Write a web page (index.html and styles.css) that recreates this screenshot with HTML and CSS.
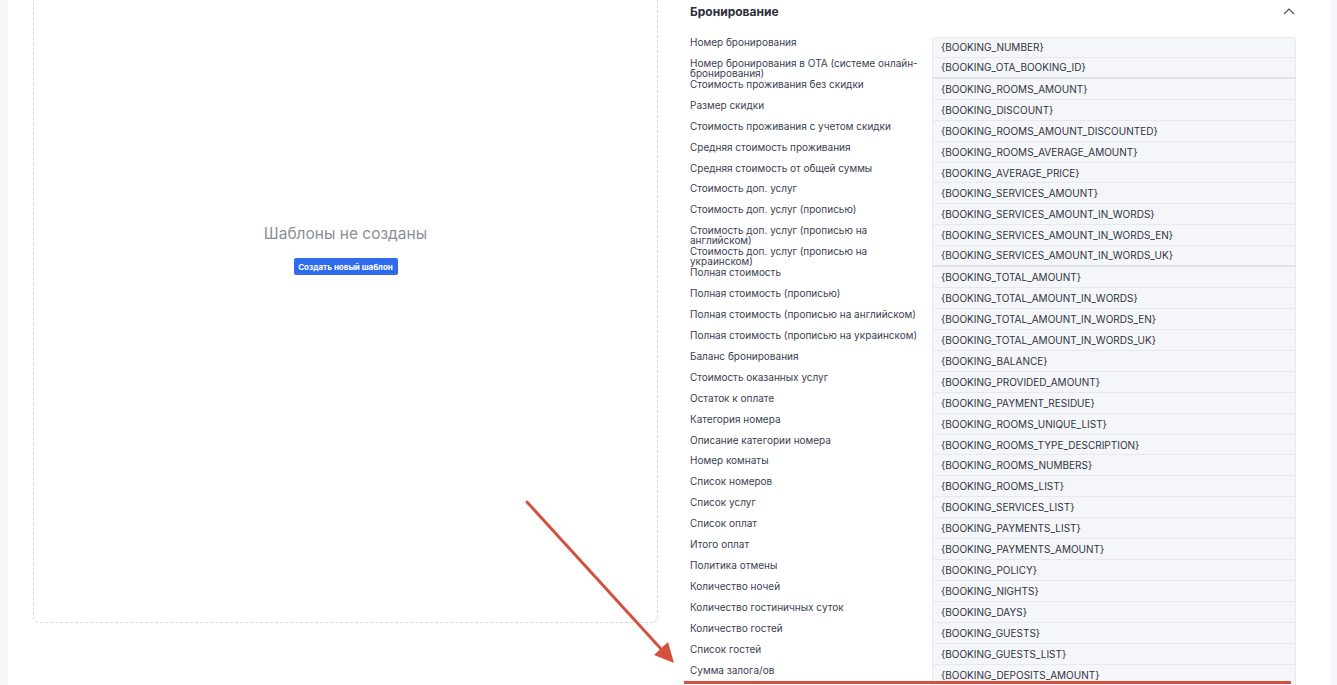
FILE: index.html
```html
<!DOCTYPE html>
<html lang="ru">
<head>
    <meta charset="UTF-8">
    <meta name="viewport" content="width=device-width, initial-scale=1.0">
    <title>Шаблоны</title>
    <link rel="stylesheet" href="styles.css">
</head>
<body>
    <div class="panel">
        <div class="templates">
            <div class="empty-card">
                <div class="empty-title">Шаблоны не созданы</div>
                <button class="btn-create">Создать новый шаблон</button>
            </div>
        </div>

        <div class="vars">
            <div class="vars-head">
                <span class="vars-title">Бронирование</span>
                <svg class="chevron" width="12" height="8" viewBox="0 0 12 8">
                    <path d="M1 7 L6 2 L11 7" fill="none" stroke="#4a5264" stroke-width="1.2"/>
                </svg>
            </div>

            <div class="vars-table">
                <div class="row"><div class="label">Номер бронирования</div><div class="value">{BOOKING_NUMBER}</div></div>
                <div class="row thick"><div class="label">Номер бронирования в ОТА (системе онлайн-бронирования)</div><div class="value">{BOOKING_OTA_BOOKING_ID}</div></div>
                <div class="row"><div class="label">Стоимость проживания без скидки</div><div class="value">{BOOKING_ROOMS_AMOUNT}</div></div>
                <div class="row"><div class="label">Размер скидки</div><div class="value">{BOOKING_DISCOUNT}</div></div>
                <div class="row"><div class="label">Стоимость проживания с учетом скидки</div><div class="value">{BOOKING_ROOMS_AMOUNT_DISCOUNTED}</div></div>
                <div class="row"><div class="label">Средняя стоимость проживания</div><div class="value">{BOOKING_ROOMS_AVERAGE_AMOUNT}</div></div>
                <div class="row"><div class="label">Средняя стоимость от общей суммы</div><div class="value">{BOOKING_AVERAGE_PRICE}</div></div>
                <div class="row"><div class="label">Стоимость доп. услуг</div><div class="value">{BOOKING_SERVICES_AMOUNT}</div></div>
                <div class="row"><div class="label">Стоимость доп. услуг (прописью)</div><div class="value">{BOOKING_SERVICES_AMOUNT_IN_WORDS}</div></div>
                <div class="row"><div class="label">Стоимость доп. услуг (прописью на английском)</div><div class="value">{BOOKING_SERVICES_AMOUNT_IN_WORDS_EN}</div></div>
                <div class="row thick"><div class="label">Стоимость доп. услуг (прописью на украинском)</div><div class="value">{BOOKING_SERVICES_AMOUNT_IN_WORDS_UK}</div></div>
                <div class="row"><div class="label">Полная стоимость</div><div class="value">{BOOKING_TOTAL_AMOUNT}</div></div>
                <div class="row"><div class="label">Полная стоимость (прописью)</div><div class="value">{BOOKING_TOTAL_AMOUNT_IN_WORDS}</div></div>
                <div class="row"><div class="label">Полная стоимость (прописью на английском)</div><div class="value">{BOOKING_TOTAL_AMOUNT_IN_WORDS_EN}</div></div>
                <div class="row"><div class="label">Полная стоимость (прописью на украинском)</div><div class="value">{BOOKING_TOTAL_AMOUNT_IN_WORDS_UK}</div></div>
                <div class="row"><div class="label">Баланс бронирования</div><div class="value">{BOOKING_BALANCE}</div></div>
                <div class="row"><div class="label">Стоимость оказанных услуг</div><div class="value">{BOOKING_PROVIDED_AMOUNT}</div></div>
                <div class="row"><div class="label">Остаток к оплате</div><div class="value">{BOOKING_PAYMENT_RESIDUE}</div></div>
                <div class="row"><div class="label">Категория номера</div><div class="value">{BOOKING_ROOMS_UNIQUE_LIST}</div></div>
                <div class="row"><div class="label">Описание категории номера</div><div class="value">{BOOKING_ROOMS_TYPE_DESCRIPTION}</div></div>
                <div class="row"><div class="label">Номер комнаты</div><div class="value">{BOOKING_ROOMS_NUMBERS}</div></div>
                <div class="row"><div class="label">Список номеров</div><div class="value">{BOOKING_ROOMS_LIST}</div></div>
                <div class="row"><div class="label">Список услуг</div><div class="value">{BOOKING_SERVICES_LIST}</div></div>
                <div class="row"><div class="label">Список оплат</div><div class="value">{BOOKING_PAYMENTS_LIST}</div></div>
                <div class="row"><div class="label">Итого оплат</div><div class="value">{BOOKING_PAYMENTS_AMOUNT}</div></div>
                <div class="row"><div class="label">Политика отмены</div><div class="value">{BOOKING_POLICY}</div></div>
                <div class="row"><div class="label">Количество ночей</div><div class="value">{BOOKING_NIGHTS}</div></div>
                <div class="row"><div class="label">Количество гостиничных суток</div><div class="value">{BOOKING_DAYS}</div></div>
                <div class="row"><div class="label">Количество гостей</div><div class="value">{BOOKING_GUESTS}</div></div>
                <div class="row"><div class="label">Список гостей</div><div class="value">{BOOKING_GUESTS_LIST}</div></div>
                <div class="row"><div class="label">Сумма залога/ов</div><div class="value">{BOOKING_DEPOSITS_AMOUNT}</div></div>
            </div>
        </div>
    </div>

    <!-- annotation drawn over the screenshot -->
    <svg class="annotation" width="1337" height="685" viewBox="0 0 1337 685">
        <line x1="527" y1="502" x2="662" y2="650" stroke="#d4503f" stroke-width="3" stroke-linecap="round"/>
        <polygon points="674,663 654,655 668,642" fill="#d4503f"/>
        <line x1="684" y1="682.5" x2="1291" y2="682.5" stroke="#d4503f" stroke-width="3"/>
    </svg>
</body>
</html>
```

FILE: styles.css
```css
body {
    margin: 0;
    background: #f6f7fb;
    font-family: Inter, "Noto Sans", sans-serif;
    color: #333;
    height: 685px;
    overflow: hidden;
}

.panel {
    margin: 0 6px 0 8px;
    background: #fff;
    height: 685px;
    display: grid;
    grid-template-columns: 625px 606px;
    column-gap: 32px;
    padding-left: 25px;
}

/* left side */
.empty-card {
    height: 623px;
    box-sizing: border-box;
    border: 1px dashed #d6d8de;
    border-top: none;
    border-radius: 0 0 6px 6px;
    display: flex;
    flex-direction: column;
    align-items: center;
    padding-top: 224px;
}

.empty-title {
    font-size: 15.5px;
    line-height: 20px;
    color: #8b8e95;
}

.btn-create {
    margin-top: 14px;
    width: 104px;
    height: 17px;
    padding: 0;
    border: none;
    border-radius: 2px;
    background: #2f6bed;
    color: #fff;
    font-family: Inter, sans-serif;
    font-size: 8px;
    font-weight: 700;
}

/* right side */
.vars-head {
    display: flex;
    justify-content: space-between;
    align-items: center;
    height: 22px;
    margin-bottom: 15px;
}

.vars-title {
    font-size: 12px;
    font-weight: 700;
    color: #2b303b;
}

.chevron {
    margin-right: 1px;
}

.row {
    display: grid;
    grid-template-columns: 234px 364px;
    column-gap: 8px;
    height: 20.93px;
}

.label {
    font-size: 10px;
    line-height: 10px;
    color: #3a4152;
}

.value {
    box-sizing: border-box;
    height: 20.93px;
    background: #f5f6fa;
    border: 1px solid #e7e9ee;
    border-top: none;
    padding-left: 8px;
    font-size: 10px;
    line-height: 20px;
    color: #2e3340;
}

.row:first-child .value {
    border-top: 1px solid #e7e9ee;
    border-radius: 4px 4px 0 0;
    line-height: 19px;
}

.row.thick .value {
    border-bottom: 2px solid #e2e4e9;
    line-height: 19px;
}

.annotation {
    position: absolute;
    top: 0;
    left: 0;
    pointer-events: none;
}
```
